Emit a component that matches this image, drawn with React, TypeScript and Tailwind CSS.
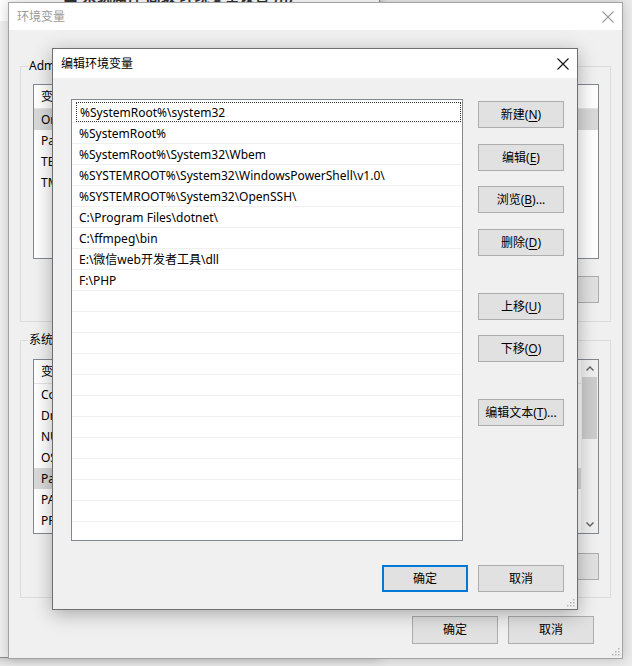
import clsx from "clsx";
import type { ReactNode } from "react";

const paths = [
  "%SystemRoot%\\system32",
  "%SystemRoot%",
  "%SystemRoot%\\System32\\Wbem",
  "%SYSTEMROOT%\\System32\\WindowsPowerShell\\v1.0\\",
  "%SYSTEMROOT%\\System32\\OpenSSH\\",
  "C:\\Program Files\\dotnet\\",
  "C:\\ffmpeg\\bin",
  "E:\\微信web开发者工具\\dll",
  "F:\\PHP",
];

const userVars = ["OneDrive", "Path", "TEMP", "TMP"];
const sysVars = [
  "ComSpec",
  "DriverData",
  "NUMBER_OF_PROCESSORS",
  "OS",
  "Path",
  "PATHEXT",
  "PROCESSOR_ARCHITECTURE",
];

function Btn({
  children,
  focus,
  className,
}: {
  children: ReactNode;
  focus?: boolean;
  className?: string;
}) {
  return (
    <div
      className={clsx(
        "flex h-[27px] w-[86px] shrink-0 items-center justify-center bg-[#e1e1e1] text-[12px] text-black",
        focus ? "border-2 border-[#0078d7]" : "border border-[#adadad]",
        className
      )}
    >
      {children}
    </div>
  );
}

function U({ children }: { children: ReactNode }) {
  return <span className="underline underline-offset-2">{children}</span>;
}

function CloseX({ color }: { color: string }) {
  return (
    <svg width="12" height="12" viewBox="0 0 12 12">
      <path d="M0.5 0.5 L11.5 11.5 M11.5 0.5 L0.5 11.5" stroke={color} strokeWidth="1.1" />
    </svg>
  );
}

function Grip() {
  return (
    <svg width="10" height="10" viewBox="0 0 10 10" className="absolute bottom-[2px] right-[2px]">
      {[
        [8, 2],
        [5, 5],
        [8, 5],
        [2, 8],
        [5, 8],
        [8, 8],
      ].map(([x, y]) => (
        <rect key={`${x}-${y}`} x={x} y={y} width="1.5" height="1.5" fill="#b5b5b5" />
      ))}
    </svg>
  );
}

function VarList({
  rows,
  selected,
  scroll,
}: {
  rows: string[];
  selected: number;
  scroll?: boolean;
}) {
  return (
    <div className="flex h-[175px] overflow-hidden border border-[#828790] bg-white">
      <div className="flex-1">
        <div className="flex h-[24px] items-center border-b border-[#e5e5e5] pl-[7px]">
          变量
        </div>
        {rows.map((r, i) => (
          <div
            key={r}
            className={clsx(
              "flex h-[21px] items-center pl-[7px]",
              i === selected && "bg-[#d9d9d9]"
            )}
          >
            {r}
          </div>
        ))}
      </div>
      {scroll && (
        <div className="flex w-[17px] flex-col items-center bg-[#f0f0f0]">
          <div className="flex h-[17px] items-center">
            <svg width="8" height="5" viewBox="0 0 8 5">
              <path d="M0.5 4.5 L4 1 L7.5 4.5" stroke="#606060" strokeWidth="1.4" fill="none" />
            </svg>
          </div>
          <div className="h-[62px] w-[15px] bg-[#cdcdcd]" />
          <div className="flex-1" />
          <div className="flex h-[17px] items-center">
            <svg width="8" height="5" viewBox="0 0 8 5">
              <path d="M0.5 0.5 L4 4 L7.5 0.5" stroke="#606060" strokeWidth="1.4" fill="none" />
            </svg>
          </div>
        </div>
      )}
    </div>
  );
}

function GroupBox({ label, children }: { label: string; children: ReactNode }) {
  return (
    <div className="relative border border-[#dcdcdc] px-[12px] pr-[11px]">
      <div className="absolute -top-[9px] left-[7px] bg-[#f0f0f0] px-[1px] leading-[16px]">
        {label}
      </div>
      {children}
    </div>
  );
}

export default function App() {
  const blanks = Array.from({ length: 13 }, (_, i) => i);

  return (
    <div className="relative h-[666px] w-[632px] overflow-hidden bg-[#ebebeb] font-['Segoe_UI','Noto_Sans','Noto_Sans_CJK_SC',sans-serif] text-[12px] text-black">
      {/* window behind everything */}
      <div className="absolute -left-[20px] -top-[20px] h-[678px] w-[400px] border border-[#8a8a8a] bg-[#f0f0f0] shadow-[0_0_10px_rgba(0,0,0,0.25)]">
        <div className="h-[40px] bg-white pl-[82px] pt-[6px] text-[15px] font-bold leading-[18px] text-[#333]">
          ■ 系统属性 高级 环境变量设置 用户
        </div>
      </div>

      {/* 环境变量 */}
      <div className="absolute left-[8px] top-[2px] flex h-[657px] w-[615px] flex-col border border-[#a3a3a3] bg-[#f0f0f0] shadow-[0_0_12px_rgba(0,0,0,0.2)]">
        <div className="flex h-[27px] shrink-0 items-center justify-between bg-white pl-[8px] pr-[8px]">
          <span className="text-[#9a9a9a]">环境变量</span>
          <CloseX color="#9a9a9a" />
        </div>

        <div className="flex flex-col px-[11px] pt-[36px]">
          <GroupBox label="Administrator 的用户变量(U)">
            <div className="pt-[17px]">
              <VarList rows={userVars} selected={0} />
            </div>
            <div className="flex justify-end gap-[8px] pb-[18px] pt-[17px]">
              <Btn>
                新建(<U>N</U>)...
              </Btn>
              <Btn>
                编辑(<U>E</U>)...
              </Btn>
              <Btn className="w-[36px]">
                删除(<U>D</U>)
              </Btn>
            </div>
          </GroupBox>

          <div className="h-[18px]" />

          <GroupBox label="系统变量(S)">
            <div className="pt-[18px]">
              <VarList rows={sysVars} selected={4} scroll />
            </div>
            <div className="flex justify-end gap-[8px] pb-[17px] pt-[19px]">
              <Btn>
                新建(<U>W</U>)...
              </Btn>
              <Btn>
                编辑(<U>I</U>)...
              </Btn>
              <Btn className="w-[20px]">
                删除(<U>L</U>)
              </Btn>
            </div>
          </GroupBox>

          <div className="flex justify-end gap-[10px] pr-[17px] pt-[18px]">
            <Btn className="h-[28px] w-[85px]">确定</Btn>
            <Btn className="h-[28px] w-[85px]">取消</Btn>
          </div>
        </div>
        <Grip />
      </div>

      {/* 编辑环境变量 */}
      <div className="absolute left-[52px] top-[48px] flex h-[562px] w-[526px] flex-col border border-[#6f6f6f] bg-[#f0f0f0] shadow-[0_4px_18px_rgba(0,0,0,0.3)]">
        <div className="flex h-[29px] shrink-0 items-center justify-between bg-white pl-[8px] pr-[8px]">
          <span>编辑环境变量</span>
          <CloseX color="#111" />
        </div>

        <div className="flex pl-[18px] pt-[21px]">
          <div className="h-[442px] w-[392px] overflow-hidden border border-[#828790] bg-white pt-[2px]">
            {paths.map((p, i) => (
              <div
                key={p}
                className="flex h-[21px] items-center border-b border-[#f0f0f0] pl-[4px] pr-[1px]"
              >
                <div
                  className={clsx(
                    "flex h-full flex-1 items-center pl-[3px] pt-[1px]",
                    i === 0 && "border border-dotted border-[#333]"
                  )}
                >
                  {p}
                </div>
              </div>
            ))}
            {blanks.map((b) => (
              <div key={b} className="h-[21px] border-b border-[#f0f0f0]" />
            ))}
          </div>

          <div className="ml-[15px] mt-[2px] flex flex-col">
            <Btn>
              新建(<U>N</U>)
            </Btn>
            <Btn className="mt-[16px]">
              编辑(<U>E</U>)
            </Btn>
            <Btn className="mt-[15px]">
              浏览(<U>B</U>)...
            </Btn>
            <Btn className="mt-[16px]">
              删除(<U>D</U>)
            </Btn>
            <Btn className="mt-[37px]">
              上移(<U>U</U>)
            </Btn>
            <Btn className="mt-[15px]">
              下移(<U>O</U>)
            </Btn>
            <Btn className="mt-[37px]">
              编辑文本(<U>T</U>)...
            </Btn>
          </div>
        </div>

        <div className="flex justify-end gap-[10px] pr-[13px] pt-[24px]">
          <Btn focus className="w-[85px]">确定</Btn>
          <Btn>取消</Btn>
        </div>
        <Grip />
      </div>
    </div>
  );
}
